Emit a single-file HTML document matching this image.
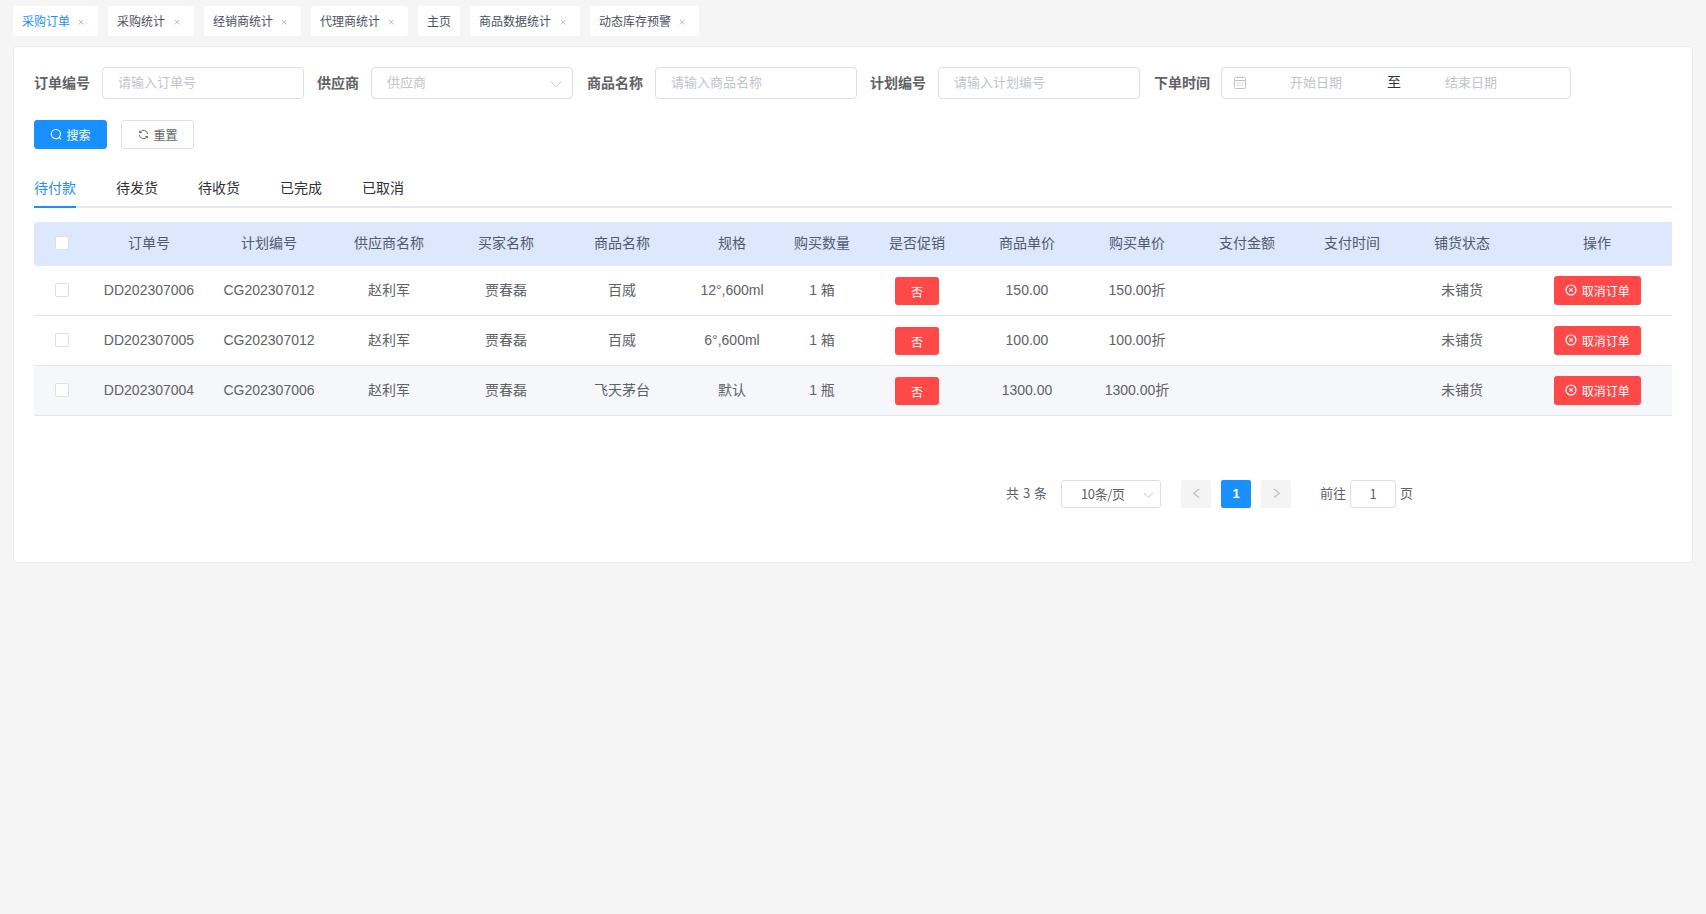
<!DOCTYPE html>
<html lang="zh-CN">
<head>
<meta charset="utf-8">
<title>采购订单</title>
<style>
*{box-sizing:border-box;margin:0;padding:0}
html,body{width:1706px;height:914px;overflow:hidden}
body{position:relative;background:#f5f5f5;font-family:"Liberation Sans","Noto Sans CJK SC",sans-serif;font-size:14px;color:#606266;-webkit-font-smoothing:antialiased}
.abs{position:absolute}
/* top tag tabs */
.tag{position:absolute;top:6px;height:30px;background:#fff;border-radius:3px;font-size:12px;line-height:32px;color:#495060;padding-left:9px;white-space:nowrap}
.tag.on{color:#1890ff}
.tag svg{position:absolute;right:14.5px;top:14px;width:4.4px;height:4.4px;overflow:visible}
.tag svg path{stroke:#adb2bd;stroke-width:1;fill:none}
.tag.on svg path{stroke:#6fb4ff}
/* card */
.card{position:absolute;left:13px;top:46px;width:1680px;height:517px;background:#fff;border:1px solid #e6ebf5;border-radius:4px}
/* form */
.lab{position:absolute;top:67px;height:32px;line-height:32px;font-size:14px;font-weight:700;color:#606266;white-space:nowrap}
.inp{position:absolute;top:67px;height:32px;border:1px solid #dcdfe6;border-radius:4px;background:#fff;font-size:13px;line-height:30px;color:#c0c4cc;padding-left:15px;white-space:nowrap}
.btn{position:absolute;top:120px;height:29px;width:73px;border-radius:3px;font-size:12px;line-height:27px;white-space:nowrap}
.btn.pri{background:#1890ff;border:1px solid #1890ff;color:#fff}
.btn.def{background:#fff;border:1px solid #dcdfe6;color:#606266}
/* el-tabs */
.tb{position:absolute;top:172px;height:32px;line-height:32px;font-size:14px;color:#303133;white-space:nowrap}
.tb.on{color:#1890ff}
/* table */
.th{position:absolute;top:222px;height:44px;line-height:43px;text-align:center;font-size:14px;color:#515a6e;white-space:nowrap}
.td{position:absolute;height:50px;line-height:49px;text-align:center;font-size:14px;color:#606266;white-space:nowrap}
.row{position:absolute;left:34px;width:1638px;height:50px;border-bottom:1px solid #dfe6ec}
.cb{position:absolute;left:55px;width:14px;height:14px;border:1px solid #dcdfe6;border-radius:2px;background:#fff}
.no{position:absolute;left:895px;width:44px;height:28px;border-radius:3px;background:#ff4949;color:#fff;font-size:12px;line-height:32px;text-align:center}
.cancel{position:absolute;left:1554px;width:87px;height:29px;border-radius:3px;background:#ff4949;color:#fff;font-size:12px;line-height:29px;white-space:nowrap}
/* pagination */
.pg{position:absolute;font-size:13px;color:#606266;white-space:nowrap;font-family:"Noto Sans CJK SC","Liberation Sans",sans-serif}
</style>
</head>
<body>

<!-- tags -->
<div class="tag on" style="left:13px;width:85px">采购订单<svg viewBox="0 0 5 5"><path d="M0 0L5 5M5 0L0 5"/></svg></div>
<div class="tag" style="left:108px;width:86px">采购统计<svg viewBox="0 0 5 5"><path d="M0 0L5 5M5 0L0 5"/></svg></div>
<div class="tag" style="left:204px;width:97px">经销商统计<svg viewBox="0 0 5 5"><path d="M0 0L5 5M5 0L0 5"/></svg></div>
<div class="tag" style="left:311px;width:97px">代理商统计<svg viewBox="0 0 5 5"><path d="M0 0L5 5M5 0L0 5"/></svg></div>
<div class="tag" style="left:418px;width:42px">主页</div>
<div class="tag" style="left:470px;width:110px">商品数据统计<svg viewBox="0 0 5 5"><path d="M0 0L5 5M5 0L0 5"/></svg></div>
<div class="tag" style="left:590px;width:109px">动态库存预警<svg viewBox="0 0 5 5"><path d="M0 0L5 5M5 0L0 5"/></svg></div>

<div class="card"></div>

<!-- form -->
<div class="lab" style="left:34px">订单编号</div>
<div class="inp" style="left:102px;width:202px">请输入订单号</div>
<div class="lab" style="left:317px">供应商</div>
<div class="inp" style="left:371px;width:202px">供应商
  <svg class="abs" style="right:10px;top:11px;width:12px;height:10px" viewBox="0 0 12 10"><path d="M0.5 2.3L6 7.8L11.5 2.3" stroke="#c0c4cc" stroke-width="0.9" fill="none"/></svg>
</div>
<div class="lab" style="left:587px">商品名称</div>
<div class="inp" style="left:655px;width:202px">请输入商品名称</div>
<div class="lab" style="left:870px">计划编号</div>
<div class="inp" style="left:938px;width:202px">请输入计划编号</div>
<div class="lab" style="left:1154px">下单时间</div>
<div class="inp" style="left:1221px;width:350px;padding-left:0">
  <svg class="abs" style="left:12px;top:8px;width:12px;height:13px" viewBox="0 0 12 13"><rect x="0.5" y="1.5" width="11" height="11" rx="0.8" stroke="#c0c4cc" fill="none"/><path d="M0.5 4.5H11.5M3.5 0.3V2.5M8.5 0.3V2.5" stroke="#c0c4cc" fill="none" stroke-width="1"/><path d="M2.6 7.5H9.6M2.6 9.7H9.6" stroke="#c0c4cc" stroke-opacity="0.75" fill="none" stroke-width="1" stroke-dasharray="1.6 1"/></svg>
  <span class="abs" style="left:68px;top:0">开始日期</span>
  <span class="abs" style="left:165px;top:-1px;color:#303133;font-size:14px">至</span>
  <span class="abs" style="left:223px;top:0">结束日期</span>
</div>

<!-- buttons -->
<div class="btn pri" style="left:34px">
  <svg class="abs" style="left:15px;top:7px;width:13px;height:13px" viewBox="0 0 13 13"><circle cx="5.9" cy="6.1" r="4.6" stroke="#fff" stroke-width="1.1" fill="none"/><path d="M9.2 9.5L10.9 11.2" stroke="#fff" stroke-width="1.1" fill="none"/></svg>
  <span class="abs" style="left:31.5px;top:2px">搜索</span>
</div>
<div class="btn def" style="left:121px">
  <svg class="abs" style="left:16px;top:7.9px;width:11px;height:11px" viewBox="0 0 11 11"><path d="M1.75 3.6A4.2 4.2 0 0 1 9.68 5.1M9.25 7.4A4.2 4.2 0 0 1 1.32 5.9" stroke="#606266" stroke-width="0.9" fill="none"/><path d="M1.3 1.3V4.1H4.1zM9.7 9.7V6.9H6.9z" fill="#606266" stroke="none"/></svg>
  <span class="abs" style="left:31.5px;top:2px">重置</span>
</div>

<!-- el-tabs -->
<div class="abs" style="left:34px;top:206px;width:1638px;height:2px;background:#e4e7ed"></div>
<div class="abs" style="left:34px;top:206px;width:42px;height:2px;background:#1890ff"></div>
<div class="tb on" style="left:34px">待付款</div>
<div class="tb" style="left:116px">待发货</div>
<div class="tb" style="left:198px">待收货</div>
<div class="tb" style="left:280px">已完成</div>
<div class="tb" style="left:362px">已取消</div>

<!-- table header -->
<div class="abs" style="left:34px;top:222px;width:1638px;height:44px;background:#dde7fd;border-radius:4px 0 0 4px"></div>
<div class="cb" style="top:236px"></div>
<div class="th" style="left:89px;width:120px">订单号</div>
<div class="th" style="left:209px;width:120px">计划编号</div>
<div class="th" style="left:329px;width:120px">供应商名称</div>
<div class="th" style="left:446px;width:120px">买家名称</div>
<div class="th" style="left:562px;width:120px">商品名称</div>
<div class="th" style="left:672px;width:120px">规格</div>
<div class="th" style="left:762px;width:120px">购买数量</div>
<div class="th" style="left:857px;width:120px">是否促销</div>
<div class="th" style="left:967px;width:120px">商品单价</div>
<div class="th" style="left:1077px;width:120px">购买单价</div>
<div class="th" style="left:1187px;width:120px">支付金额</div>
<div class="th" style="left:1292px;width:120px">支付时间</div>
<div class="th" style="left:1402px;width:120px">铺货状态</div>
<div class="th" style="left:1537px;width:120px">操作</div>

<!-- rows -->
<div class="row" style="top:266px"></div>
<div class="row" style="top:316px"></div>
<div class="row" style="top:366px;background:#f5f7fa"></div>

<!-- row 1 -->
<div class="cb" style="top:283px"></div>
<div class="td" style="top:266px;left:89px;width:120px">DD202307006</div>
<div class="td" style="top:266px;left:209px;width:120px">CG202307012</div>
<div class="td" style="top:266px;left:329px;width:120px">赵利军</div>
<div class="td" style="top:266px;left:446px;width:120px">贾春磊</div>
<div class="td" style="top:266px;left:562px;width:120px">百威</div>
<div class="td" style="top:266px;left:672px;width:120px">12°,600ml</div>
<div class="td" style="top:266px;left:762px;width:120px">1 箱</div>
<div class="no" style="top:277px">否</div>
<div class="td" style="top:266px;left:967px;width:120px">150.00</div>
<div class="td" style="top:266px;left:1077px;width:120px">150.00折</div>
<div class="td" style="top:266px;left:1402px;width:120px">未铺货</div>
<div class="cancel" style="top:276px"><svg class="abs" style="left:10.7px;top:8.4px;width:12px;height:12px" viewBox="0 0 12 12"><circle cx="6" cy="6" r="5" stroke="#fff" stroke-width="1.2" fill="none"/><path d="M4.3 4.3L7.7 7.7M7.7 4.3L4.3 7.7" stroke="#fff" stroke-width="1.15" fill="none"/></svg><span class="abs" style="left:27.7px;top:1.5px">取消订单</span></div>

<!-- row 2 -->
<div class="cb" style="top:333px"></div>
<div class="td" style="top:316px;left:89px;width:120px">DD202307005</div>
<div class="td" style="top:316px;left:209px;width:120px">CG202307012</div>
<div class="td" style="top:316px;left:329px;width:120px">赵利军</div>
<div class="td" style="top:316px;left:446px;width:120px">贾春磊</div>
<div class="td" style="top:316px;left:562px;width:120px">百威</div>
<div class="td" style="top:316px;left:672px;width:120px">6°,600ml</div>
<div class="td" style="top:316px;left:762px;width:120px">1 箱</div>
<div class="no" style="top:327px">否</div>
<div class="td" style="top:316px;left:967px;width:120px">100.00</div>
<div class="td" style="top:316px;left:1077px;width:120px">100.00折</div>
<div class="td" style="top:316px;left:1402px;width:120px">未铺货</div>
<div class="cancel" style="top:326px"><svg class="abs" style="left:10.7px;top:8.4px;width:12px;height:12px" viewBox="0 0 12 12"><circle cx="6" cy="6" r="5" stroke="#fff" stroke-width="1.2" fill="none"/><path d="M4.3 4.3L7.7 7.7M7.7 4.3L4.3 7.7" stroke="#fff" stroke-width="1.15" fill="none"/></svg><span class="abs" style="left:27.7px;top:1.5px">取消订单</span></div>

<!-- row 3 -->
<div class="cb" style="top:383px"></div>
<div class="td" style="top:366px;left:89px;width:120px">DD202307004</div>
<div class="td" style="top:366px;left:209px;width:120px">CG202307006</div>
<div class="td" style="top:366px;left:329px;width:120px">赵利军</div>
<div class="td" style="top:366px;left:446px;width:120px">贾春磊</div>
<div class="td" style="top:366px;left:562px;width:120px">飞天茅台</div>
<div class="td" style="top:366px;left:672px;width:120px">默认</div>
<div class="td" style="top:366px;left:762px;width:120px">1 瓶</div>
<div class="no" style="top:377px">否</div>
<div class="td" style="top:366px;left:967px;width:120px">1300.00</div>
<div class="td" style="top:366px;left:1077px;width:120px">1300.00折</div>
<div class="td" style="top:366px;left:1402px;width:120px">未铺货</div>
<div class="cancel" style="top:376px"><svg class="abs" style="left:10.7px;top:8.4px;width:12px;height:12px" viewBox="0 0 12 12"><circle cx="6" cy="6" r="5" stroke="#fff" stroke-width="1.2" fill="none"/><path d="M4.3 4.3L7.7 7.7M7.7 4.3L4.3 7.7" stroke="#fff" stroke-width="1.15" fill="none"/></svg><span class="abs" style="left:27.7px;top:1.5px">取消订单</span></div>

<!-- pagination -->
<div class="pg" style="left:1006px;top:479px;line-height:28px;word-spacing:1px">共 3 条</div>
<div class="pg" style="left:1061px;top:480px;width:100px;height:28px;border:1px solid #dcdfe6;border-radius:3px;background:#fff;line-height:25px;padding-left:19px;letter-spacing:-0.4px">10条/页
  <svg class="abs" style="right:6px;top:9.6px;width:11px;height:8px" viewBox="0 0 11 8"><path d="M1 1.8L5.5 6.3L10 1.8" stroke="#c0c4cc" stroke-width="1" fill="none"/></svg>
</div>
<div class="abs" style="left:1181px;top:480px;width:30px;height:28px;border-radius:2px;background:#f4f4f5">
  <svg class="abs" style="left:11px;top:7.6px;width:9px;height:11px" viewBox="0 0 9 11"><path d="M7 1L1.9 5.3L7 9.6" stroke="#c0c4cc" stroke-width="1.5" fill="none"/></svg>
</div>
<div class="abs" style="left:1221px;top:480px;width:30px;height:28px;border-radius:2px;background:#1890ff;color:#fff;font-size:13px;font-weight:700;line-height:28px;text-align:center">1</div>
<div class="abs" style="left:1261px;top:480px;width:30px;height:28px;border-radius:2px;background:#f4f4f5">
  <svg class="abs" style="left:11px;top:7.6px;width:9px;height:11px" viewBox="0 0 9 11"><path d="M2 1L7.1 5.3L2 9.6" stroke="#c0c4cc" stroke-width="1.5" fill="none"/></svg>
</div>
<div class="pg" style="left:1320px;top:479px;line-height:28px">前往</div>
<div class="pg" style="left:1350px;top:480px;width:46px;height:28px;border:1px solid #dcdfe6;border-radius:3px;background:#fff;line-height:25px;text-align:center">1</div>
<div class="pg" style="left:1400px;top:479px;line-height:28px">页</div>

</body>
</html>
